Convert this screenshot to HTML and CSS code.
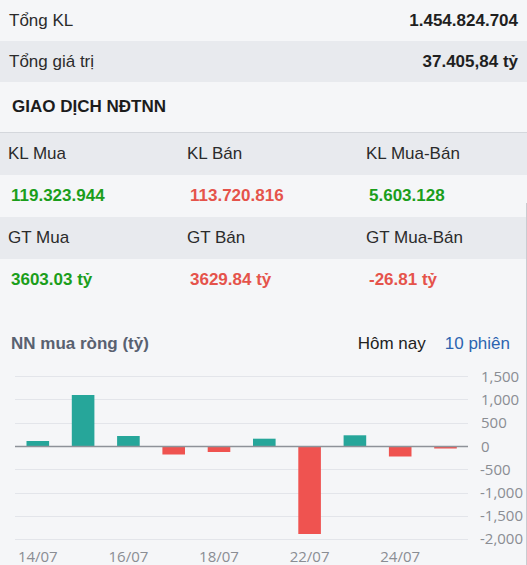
FILE: index.html
```html
<!DOCTYPE html>
<html lang="vi">
<head>
  <meta charset="UTF-8">
  <meta name="viewport" content="width=device-width, initial-scale=1.0">
  <title>Giao dịch NĐTNN</title>
  <link rel="stylesheet" href="styles.css">
</head>
<body>
  <div class="summary-row">
    <span class="summary-label">Tổng KL</span>
    <span class="summary-value">1.454.824.704</span>
  </div>
  <div class="summary-row alt">
    <span class="summary-label">Tổng giá trị</span>
    <span class="summary-value">37.405,84 tỷ</span>
  </div>

  <h2 class="section-title">GIAO DỊCH NĐTNN</h2>

  <div class="foreign-table">
    <div class="table-row head">
      <span>KL Mua</span>
      <span>KL Bán</span>
      <span>KL Mua-Bán</span>
    </div>
    <div class="table-row values">
      <span class="up">119.323.944</span>
      <span class="down">113.720.816</span>
      <span class="up">5.603.128</span>
    </div>
    <div class="table-row head">
      <span>GT Mua</span>
      <span>GT Bán</span>
      <span>GT Mua-Bán</span>
    </div>
    <div class="table-row values">
      <span class="up">3603.03 tỷ</span>
      <span class="down">3629.84 tỷ</span>
      <span class="down">-26.81 tỷ</span>
    </div>
  </div>

  <div class="chart-header">
    <span class="chart-title">NN mua ròng (tỷ)</span>
    <div class="chart-tabs">
      <span class="tab">Hôm nay</span>
      <span class="tab active">10 phiên</span>
    </div>
  </div>

  <svg class="chart" width="526" height="212" viewBox="0 0 526 212">
    <!-- grid -->
    <g class="grid">
      <line x1="15" y1="20.5" x2="468" y2="20.5"/>
      <line x1="15" y1="43.5" x2="468" y2="43.5"/>
      <line x1="15" y1="67.5" x2="468" y2="67.5"/>
      <line x1="15" y1="113.5" x2="468" y2="113.5"/>
      <line x1="15" y1="137.5" x2="468" y2="137.5"/>
      <line x1="15" y1="160.5" x2="468" y2="160.5"/>
      <line x1="15" y1="183.5" x2="468" y2="183.5"/>
    </g>
    <!-- bars: 14/07 .. 25/07 -->
    <g>
      <rect class="bar-up" x="26.5" y="85" width="22.6" height="5.5"/>
      <rect class="bar-up" x="71.8" y="39" width="22.6" height="51.5"/>
      <rect class="bar-up" x="117.1" y="80" width="22.6" height="10.5"/>
      <rect class="bar-down" x="162.4" y="90.5" width="22.6" height="8"/>
      <rect class="bar-down" x="207.7" y="90.5" width="22.6" height="5.5"/>
      <rect class="bar-up" x="253" y="82.7" width="22.6" height="7.8"/>
      <rect class="bar-down" x="298.3" y="90.5" width="22.6" height="87.5"/>
      <rect class="bar-up" x="343.6" y="79.3" width="22.6" height="11.2"/>
      <rect class="bar-down" x="388.9" y="90.5" width="22.6" height="10"/>
      <rect class="bar-down" x="434.2" y="90.5" width="22.6" height="2"/>
    </g>
    <line class="zero" x1="15" y1="90.5" x2="468" y2="90.5"/>
    <!-- y axis -->
    <g class="axis-y">
      <text x="481" y="25.5">1,500</text>
      <text x="481" y="48.5">1,000</text>
      <text x="481" y="72">500</text>
      <text x="481" y="95.5">0</text>
      <text x="480" y="118.5">-500</text>
      <text x="480" y="142">-1,000</text>
      <text x="480" y="165">-1,500</text>
      <text x="480" y="188">-2,000</text>
    </g>
    <!-- x axis -->
    <g class="axis-x">
      <text x="37.8" y="206">14/07</text>
      <text x="128.4" y="206">16/07</text>
      <text x="219" y="206">18/07</text>
      <text x="309.6" y="206">22/07</text>
      <text x="400.2" y="206">24/07</text>
    </g>
  </svg>

  <div class="scroll-edge"></div>
</body>
</html>
```

FILE: styles.css
```css
body {
  margin: 0;
  position: relative;
  height: 565px;
  overflow: hidden;
  background-color: #f5f6f8;
  font-family: 'Liberation Sans', Arial, sans-serif;
  font-size: 17px;
  color: #2b2b2b;
}
.summary-row {
  display: flex;
  justify-content: space-between;
  align-items: center;
  height: 41px;
  padding: 0 9px 0 9px;
}
.summary-row.alt {
  background-color: #e8eaee;
}
.summary-value {
  font-weight: bold;
  color: #1f1f1f;
}
.section-title {
  margin: 0;
  height: 50px;
  display: flex;
  align-items: center;
  padding: 0 12px;
  font-size: 17px;
  font-weight: bold;
  color: #1c1c1c;
}
.foreign-table {
  border-top: 1px solid #d4d7dc;
}
.table-row {
  display: grid;
  grid-template-columns: 179px 179px 179px;
  align-items: center;
  height: 42px;
  padding-left: 8px;
}
.table-row.head {
  background-color: #e8eaee;
}
.table-row.values span {
  font-weight: bold;
  padding-left: 3px;
}
.up {
  color: #1b9e1b;
}
.down {
  color: #e5534b;
}
.chart-header {
  display: flex;
  justify-content: space-between;
  align-items: center;
  padding: 33px 17px 0 11px;
}
.chart-title {
  font-weight: bold;
  color: #596170;
}
.chart-tabs {
  display: flex;
  gap: 19px;
}
.tab {
  color: #222;
}
.tab.active {
  color: #2c64b0;
}
.chart {
  display: block;
  margin-top: 2px;
  overflow: hidden;
}
.grid line {
  stroke: #e3e5ea;
  stroke-width: 1;
}
.zero {
  stroke: #8e9299;
  stroke-width: 1.5;
}
.bar-up {
  fill: #26a69a;
}
.bar-down {
  fill: #ef5350;
}
.chart text {
  font-family: 'Open Sans', 'Noto Sans', sans-serif;
  font-size: 15px;
  fill: #8a8d93;
}
.axis-x text {
  text-anchor: middle;
}
.scroll-edge {
  position: absolute;
  right: 0;
  top: 203px;
  bottom: 0;
  width: 1px;
  background-color: #c9ccd1;
}
```
